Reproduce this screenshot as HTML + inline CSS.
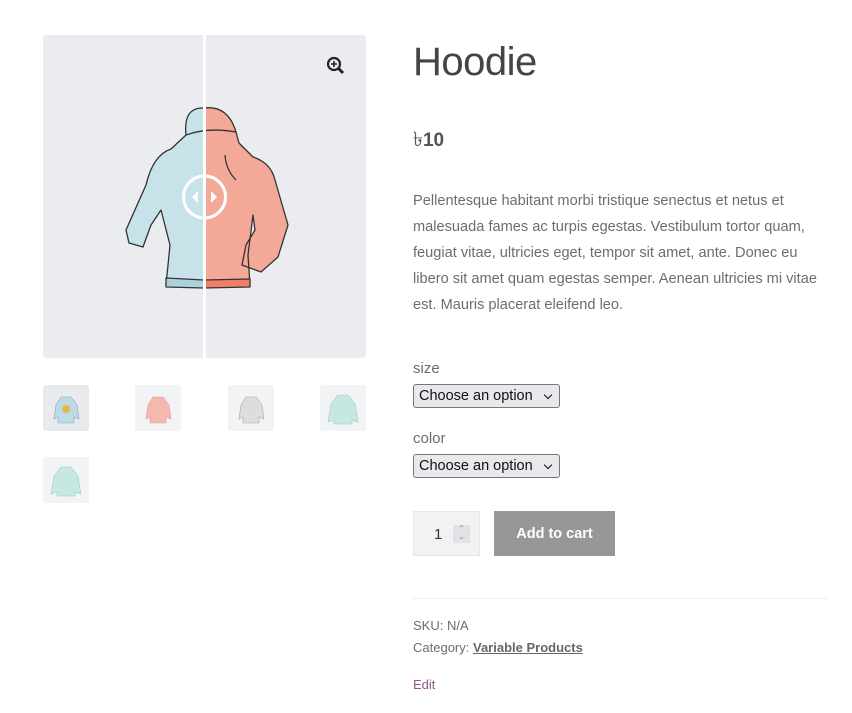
<!DOCTYPE html>
<html><head><meta charset="utf-8"><style>
*{margin:0;padding:0;box-sizing:border-box}
body{width:852px;height:713px;background:#fff;font-family:"Liberation Sans","DejaVu Sans",sans-serif;color:#6d6d6d;position:relative;overflow:hidden}
.a{position:absolute}
.main{left:43px;top:35px;width:323px;height:323px;background:#eaecf0;border-radius:3px;overflow:hidden}
.th{width:46px;height:46px;background:#f1f3f5;border-radius:3px;position:absolute;overflow:hidden}
h1{left:413px;top:40px;font-size:40px;font-weight:200;color:#444;font-family:"DejaVu Sans ExtraLight","Liberation Sans",sans-serif;letter-spacing:-0.5px}
.price{left:413px;top:125px;font-size:19px;color:#555;font-weight:bold}
.desc{left:413px;top:188px;width:420px;font-size:14.6px;line-height:26px;color:#6d6d6d}
.lbl{font-size:15px;color:#6d6d6d;left:413px}
.sel{left:413px;width:147px;height:24px;border:1px solid #767676;border-radius:3px;background:#e9e9ed;font-size:14.5px;color:#111;padding:3px 0 0 5px}
.sel:after{content:"";position:absolute;right:8px;top:7px;width:5px;height:5px;border-right:1.5px solid #111;border-bottom:1.5px solid #111;transform:rotate(45deg)}
</style></head><body>
<div class="a main">
<svg width="323" height="323" viewBox="0 0 323 323">
<g stroke="#333" stroke-width="1.3" stroke-linejoin="round">
<path d="M161 73 Q140 72 143 100 L128 114 Q110 120 103 150 L83 195 L86 208 L100 212 L108 190 L118 175 L127 210 L123 250 L161 252 Z" fill="#c8e2ea"/>
<path d="M161 73 Q185 70 193 97 L196 108 L210 122 Q228 128 232 145 L245 190 L235 222 L218 237 L199 230 L203 210 L212 195 L210 180 L205 220 L207 250 L161 252 Z" fill="#f4a897"/>
<path d="M161 245 L207 244 L207 252 L161 253 Z" fill="#f07e66"/>
<path d="M123 243 L161 245 L161 253 L123 252Z" fill="#a9d1de"/>
<path d="M143 100 Q165 92 193 97" fill="none"/>
<path d="M182 120 Q183 135 193 145" fill="none"/>
</g>
<rect x="160" y="0" width="3" height="323" fill="#fff"/>
<circle cx="161.5" cy="162" r="21" fill="none" stroke="#fff" stroke-width="3"/>
<path d="M155 156 L149 162 L155 168Z M168 156 L174 162 L168 168Z" fill="#fff"/>
<circle cx="291" cy="29" r="6" fill="none" stroke="#222" stroke-width="2.2"/>
<path d="M295 33 L300 38" stroke="#222" stroke-width="3"/>
<path d="M291 26 V32 M288 29 H294" stroke="#222" stroke-width="1.6"/>
</svg></div>
<div class="th" style="left:43px;top:385px;background:#e8eaee"><svg width="46" height="46"><path d="M18 12 h10 l6 8 l2 14 l-5 -2 v6 h-16 v-6 l-4 2 l2 -14Z" fill="#bcdbe5" stroke="#8ab" stroke-width=".6"/><circle cx="23" cy="24" r="4" fill="#e8b64a"/></svg></div>
<div class="th" style="left:135px;top:385px"><svg width="46" height="46"><path d="M18 12 h10 l6 8 l2 14 l-5 -2 v6 h-16 v-6 l-4 2 l2 -14Z" fill="#f5b8ae" stroke="#e99" stroke-width=".6"/></svg></div>
<div class="th" style="left:228px;top:385px"><svg width="46" height="46"><path d="M18 12 h10 l6 8 l2 14 l-5 -2 v6 h-16 v-6 l-4 2 l2 -14Z" fill="#ddd" stroke="#aaa" stroke-width=".6"/></svg></div>
<div class="th" style="left:320px;top:385px"><svg width="46" height="46"><path d="M18 10 h10 l7 9 l3 18 l-6 -2 v4 h-18 v-4 l-6 2 l3 -18Z" fill="#c6e8e0" stroke="#9cc" stroke-width=".6"/></svg></div>
<div class="th" style="left:43px;top:457px"><svg width="46" height="46"><path d="M18 10 h10 l7 9 l3 18 l-6 -2 v4 h-18 v-4 l-6 2 l3 -18Z" fill="#c6e8e0" stroke="#9cc" stroke-width=".6"/></svg></div>
<h1 class="a">Hoodie</h1>
<div class="a price"><span style="font-family:'DejaVu Sans';font-weight:normal;font-size:20px">৳</span>10</div>
<div class="a desc">Pellentesque habitant morbi tristique senectus et netus et malesuada fames ac turpis egestas. Vestibulum tortor quam, feugiat vitae, ultricies eget, tempor sit amet, ante. Donec eu libero sit amet quam egestas semper. Aenean ultricies mi vitae est. Mauris placerat eleifend leo.</div>
<div class="a lbl" style="top:360px">size</div>
<div class="a sel" style="top:384px">Choose an option</div>
<div class="a lbl" style="top:430px">color</div>
<div class="a sel" style="top:454px">Choose an option</div>
<div class="a" style="left:413px;top:511px;width:67px;height:45px;background:#f2f2f2;border:1px solid #e6e6e6;font-size:15px;color:#333;padding:14px 0 0 20px">1<span style="position:absolute;left:39px;top:13px;width:17px;height:18px;background:#e2e2e6;font-size:8px;color:#888;text-align:center;line-height:8px">⌃<br>⌄</span></div>
<div class="a" style="left:494px;top:511px;width:121px;height:45px;background:#979797;color:#fff;font-weight:bold;font-size:14.5px;text-align:center;line-height:47px">Add to cart</div>
<div class="a" style="left:413px;top:598px;width:415px;height:1px;background:#eee"></div>
<div class="a" style="left:413px;top:618px;font-size:13px">SKU: N/A</div>
<div class="a" style="left:413px;top:640px;font-size:13px">Category: <span style="text-decoration:underline;font-weight:bold;color:#666">Variable Products</span></div>
<div class="a" style="left:413px;top:677px;font-size:13px;color:#96588a">Edit</div>
</body></html>
